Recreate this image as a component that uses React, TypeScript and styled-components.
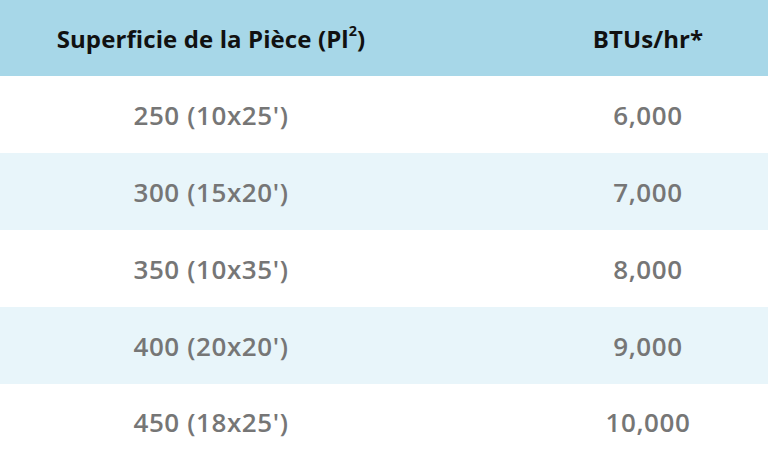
import React from "react";
import styled, { createGlobalStyle } from "styled-components";

const GlobalStyle = createGlobalStyle`
  html, body {
    margin: 0;
    padding: 0;
    background: #ffffff;
  }
  body {
    font-family: "Open Sans", "Noto Sans", Arial, sans-serif;
  }
`;

const Table = styled.div`
  width: 768px;
  height: 460px;
  display: grid;
  grid-template-rows: 76px repeat(4, 77px) 76px;
  overflow: hidden;
`;

const Row = styled.div<{ $tone: "head" | "plain" | "tint" }>`
  display: grid;
  grid-template-columns: 422px 1fr;
  align-items: center;
  background: ${(p) =>
    p.$tone === "head" ? "#a7d7e8" : p.$tone === "tint" ? "#e8f5fa" : "#ffffff"};
`;

const Cell = styled.div<{ $head?: boolean; $right?: boolean }>`
  text-align: center;
  padding-left: ${(p) => (p.$right ? "106px" : "0")};
  font-size: ${(p) => (p.$head ? "24px" : "26px")};
  font-weight: ${(p) => (p.$head ? 700 : 600)};
  color: ${(p) => (p.$head ? "#111111" : "#767676")};
  letter-spacing: ${(p) => (p.$head ? "0.1px" : "0.6px")};
  white-space: nowrap;

  sup {
    font-size: 0.6em;
    line-height: 0;
    position: relative;
    top: -0.2em;
  }
`;

const rows = [
  ["250 (10x25')", "6,000"],
  ["300 (15x20')", "7,000"],
  ["350 (10x35')", "8,000"],
  ["400 (20x20')", "9,000"],
  ["450 (18x25')", "10,000"],
];

const App: React.FC = () => {
  return (
    <>
      <GlobalStyle />
      <Table>
        <Row $tone="head">
          <Cell $head>
            Superficie de la Pièce (Pl<sup>2</sup>)
          </Cell>
          <Cell $head $right>
            BTUs/hr*
          </Cell>
        </Row>
        {rows.map((r, i) => (
          <Row key={r[0]} $tone={i % 2 === 1 ? "tint" : "plain"}>
            <Cell>{r[0]}</Cell>
            <Cell $right>{r[1]}</Cell>
          </Row>
        ))}
      </Table>
    </>
  );
};

export default App;
